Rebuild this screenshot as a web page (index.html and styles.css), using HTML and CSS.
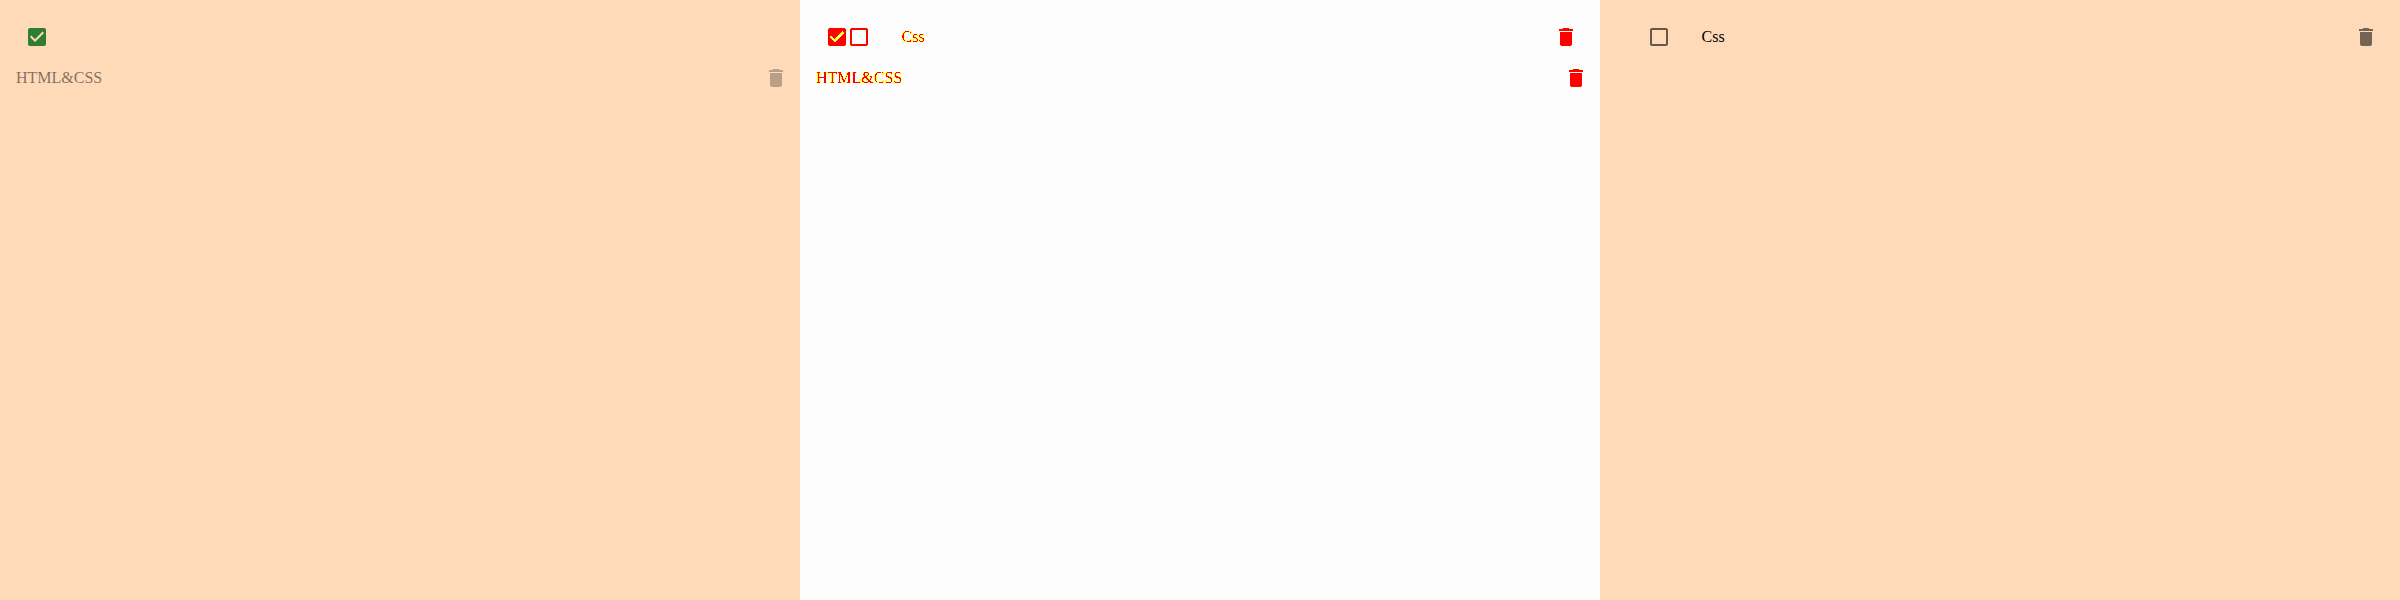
FILE: index.html
```
<!DOCTYPE html>
<html lang="en">
<head>
<meta charset="utf-8">
<title>Tasks</title>
<link rel="stylesheet" href="styles.css">
</head>
<body>
<svg class="defs" aria-hidden="true">
  <defs>
    <filter id="mark" x="-10%" y="-10%" width="120%" height="120%" color-interpolation-filters="sRGB">
      <feColorMatrix type="matrix" values="0 0 0 0 1  0 0 0 -1 1  0 0 0 0 0  0 0 0 1 0"/>
      <feComponentTransfer>
        <feFuncG type="discrete" tableValues="0 0 0 0 1 1 1 1 1 1"/>
        <feFuncA type="discrete" tableValues="0 1 1 1 1 1 1 1 1 1 1 1 1 1 1 1 1 1 1 1"/>
      </feComponentTransfer>
    </filter>
    <symbol id="checked" viewBox="0 0 24 24"><path d="M19 3H5c-1.11 0-2 .9-2 2v14c0 1.1.89 2 2 2h14c1.11 0 2-.9 2-2V5c0-1.1-.89-2-2-2zm-9 14l-5-5 1.41-1.41L10 14.17l7.59-7.59L19 8l-9 9z"/></symbol>
    <symbol id="unchecked" viewBox="0 0 24 24"><path d="M19 5v14H5V5h14m0-2H5c-1.100 0-2 .9-2 2v14c0 1.1.9 2 2 2h14c1.1 0 2-.9 2-2V5c0-1.1-.9-2-2-2z"/></symbol>
    <symbol id="trash" viewBox="0 0 24 24"><path d="M6 19c0 1.1.9 2 2 2h8c1.1 0 2-.9 2-2V7H6v12zM19 4h-3.500l-1-1h-5l-1 1H5v2h14V4z"/></symbol>
  </defs>
</svg>
<main class="board">
  <section class="panel">
    <div class="row">
      <svg class="icon green"><use href="#checked"/></svg>
    </div>
    <div class="row second">
      <span class="label faded">HTML&amp;CSS</span>
      <svg class="icon end pale"><use href="#trash"/></svg>
    </div>
  </section>
  <section class="panel marked">
    <div class="row">
      <svg class="icon check" viewBox="0 0 24 24" shape-rendering="crispEdges">
        <path class="yellow" d="M3 3h18v18H3z"/>
        <path class="red" d="M4 3h16v1h1v16h-1v1H4v-1H3V4h1z"/>
        <path class="tick outer" d="M5.500 11.500l4.500 4.300 8.500-8.500"/>
        <path class="tick inner" d="M5.700 11.700l4.300 4.100 8.300-8.300"/>
      </svg>
      <svg class="icon box-next"><use href="#unchecked"/></svg>
      <span class="label">Css</span>
      <svg class="icon end"><use href="#trash"/></svg>
    </div>
    <div class="row second">
      <span class="label">HTML&amp;CSS</span>
      <svg class="icon end"><use href="#trash"/></svg>
    </div>
  </section>
  <section class="panel">
    <div class="row open">
      <svg class="icon box"><use href="#unchecked"/></svg>
      <span class="label">Css</span>
      <svg class="icon end bin"><use href="#trash"/></svg>
    </div>
  </section>
</main>
</body>
</html>
```
FILE: styles.css
```
* { box-sizing: border-box; }
body { margin: 0; font: 16px/24px "Liberation Serif", "Times New Roman", serif; color: #000; }
.defs { position: absolute; width: 0; height: 0; }
.board { display: grid; grid-template-columns: repeat(3, 800px); height: 600px; }
.panel { background: #ffdab9; padding-top: 25px; overflow: hidden; }
.row { display: flex; align-items: center; height: 24px; padding: 0 22px 0 25px; }
.row.second { margin-top: 17px; padding: 0 12px 0 16px; }
.row.open { padding-left: 47px; }
.icon { display: block; flex: none; width: 24px; height: 24px; fill: currentColor; }
.icon + .label { margin-left: 30.500px; }
.box-next { margin-left: -2px; }
.end { margin-left: auto; }
.green { color: #2e7d32; }
.faded { color: rgba(0, 0, 0, 0.5); }
.pale { color: rgba(0, 0, 0, 0.27); }
.box { color: rgba(0, 0, 0, 0.6); }
.bin { color: rgba(0, 0, 0, 0.54); }
.marked { background: #fcfcfc; }
.marked .icon, .marked .label { filter: url(#mark); }
.marked .check { filter: none; }
.yellow { fill: #ff0; }
.red { fill: #f00; }
.tick { fill: none; }
.outer { stroke: #ff0; stroke-width: 2.600; }
.inner { stroke: #fcfcfc; stroke-width: 1.100; }
```
